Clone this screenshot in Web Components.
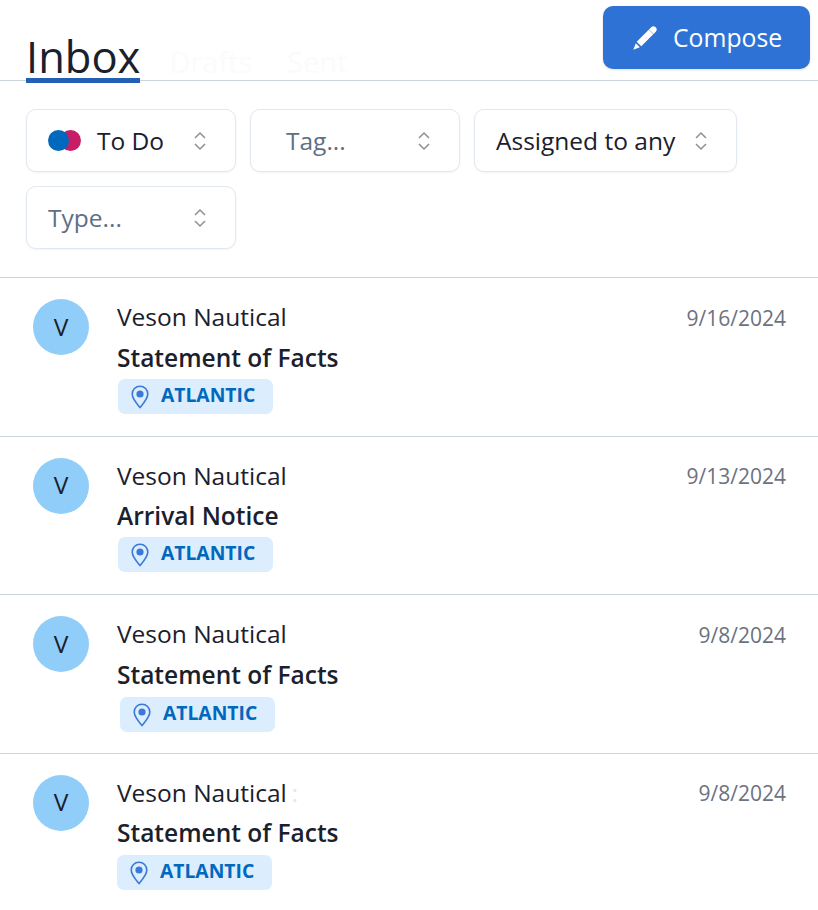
<!DOCTYPE html>
<html lang="en">
<head>
<meta charset="utf-8">
<title>Inbox</title>
<style>
  html, body { margin: 0; background: #fff; }
  body { font-family: "Open Sans", sans-serif; color: #1a202c; overflow: hidden; height: 910px; }
  [slot="after"] { margin-left: 5px; }
</style>
</head>
<body>
<inbox-page>
  <inbox-header></inbox-header>
  <inbox-filters>
    <filter-select dots value>To Do</filter-select>
    <filter-select indent>Tag...</filter-select>
    <filter-select value wide>Assigned to any</filter-select>
    <filter-select>Type...</filter-select>
  </inbox-filters>
  <inbox-row date="9/16/2024" subject="Statement of Facts" height="159" gap="5" date-top="1"></inbox-row>
  <inbox-row date="9/13/2024" subject="Arrival Notice" height="158" gap="4"></inbox-row>
  <inbox-row date="9/8/2024" subject="Statement of Facts" height="159" gap="5" date-top="1" shift="3" drop="1"></inbox-row>
  <inbox-row date="9/8/2024" subject="Statement of Facts" height="157" gap="4" shift="0" drop="1" last>
    <span slot="after">:</span>
  </inbox-row>
</inbox-page>

<script>
class InboxPage extends HTMLElement {
  constructor() {
    super();
    this.attachShadow({ mode: "open" });
    this.shadowRoot.innerHTML = `
    <style>:host { display: block; }</style>
    <slot></slot>`;
  }
}

class InboxHeader extends HTMLElement {
  constructor() {
    super();
    this.attachShadow({ mode: "open" });
    this.shadowRoot.innerHTML = /* html */`
    <style>
      :host {
        display: flex;
        justify-content: space-between;
        height: 80px;
        padding: 0 8px 0 26px;
        border-bottom: 1px solid #cbd5e0;
      }
      .tabs { display: flex; gap: 29px; align-items: flex-end; }
      .tab {
        font-size: 29px;
        line-height: 36px;
        height: 36px;
        color: #fbfbfb;
      }
      .tab + .tab + .tab { margin-left: 6px; }
      .tab.active {
        font-size: 43.500px;
        line-height: 52px;
        height: 47px;
        color: #1a202c;
        margin-bottom: -3px;
        border-bottom: 5px solid #225fb5;
      }
      .compose {
        display: flex;
        align-items: center;
        gap: 16px;
        box-sizing: border-box;
        width: 207px;
        height: 63px;
        margin-top: 6px;
        padding-left: 30px;
        border: 0;
        border-radius: 10px;
        background: #2f72d6;
        color: #fff;
        font: 400 24.75px "Open Sans", sans-serif;
        box-shadow: 0 1px 3px rgba(0,0,0,.12);
      }
      svg { width: 24px; height: 24px; fill: #fff; flex: none; }
    </style>
    <div class="tabs">
      <div class="tab active">Inbox</div>
      <div class="tab">Drafts</div>
      <div class="tab">Sent</div>
    </div>
    <button class="compose">
      <svg viewBox="0 0 24 24">
        <path d="M3.740 15.740 18.240 1.240A3.200 3.200 0 0 1 22.760 5.760L8.260 20.260Z"/>
        <path d="M2.800 17.200 6.800 21.200.3 23.700Z"/>
        <path d="M15.900 3.600 20.400 8.100" stroke="#2f72d6" stroke-width=".5"/>
      </svg>
      <span>Compose</span>
    </button>`;
  }
}

class InboxFilters extends HTMLElement {
  constructor() {
    super();
    this.attachShadow({ mode: "open" });
    this.shadowRoot.innerHTML = `
    <style>
      :host {
        display: flex;
        flex-wrap: wrap;
        gap: 14px;
        box-sizing: border-box;
        height: 197px;
        padding: 28px 60px 0 26px;
        border-bottom: 1px solid #cbd5e0;
        align-content: flex-start;
      }
    </style>
    <slot></slot>`;
  }
}

class FilterSelect extends HTMLElement {
  constructor() {
    super();
    this.attachShadow({ mode: "open" });
    this.shadowRoot.innerHTML = /* html */`
    <style>
      :host {
        display: flex;
        align-items: center;
        box-sizing: border-box;
        width: 210px;
        height: 63px;
        padding: 0 29px 0 21px;
        border: 1px solid #e2e8f0;
        border-radius: 10px;
        background: #fff;
        box-shadow: 0 1px 2px rgba(0,0,0,.05);
        font-size: 24.5px;
        color: #5f6f85;
      }
      :host([value]) { color: #1a202c; }
      :host([indent]) { padding-left: 35px; }
      :host([wide]) { width: 263px; }
      .dots { display: none; position: relative; width: 33px; height: 21px; margin-right: 16px; flex: none; }
      :host([dots]) .dots { display: block; }
      .dots i { position: absolute; top: 0; width: 21px; height: 21px; border-radius: 50%; }
      .dots i:first-child { left: 12px; background: #c71d66; }
      .dots i:last-child { left: 0; background: #0068bd; }
      .label { flex: 1; white-space: nowrap; }
      svg { width: 12px; height: 20px; flex: none; fill: none; stroke: #8f8f8f; stroke-width: 1.5; }
    </style>
    <span class="dots"><i></i><i></i></span>
    <span class="label"><slot></slot></span>
    <svg viewBox="0 0 12 20"><path d="M1 7 6 2l5 5M1 13l5 5 5-5"/></svg>`;
  }
}

class LocationTag extends HTMLElement {
  constructor() {
    super();
    this.attachShadow({ mode: "open" });
    this.shadowRoot.innerHTML = /* html */`
    <style>
      :host {
        display: inline-flex;
        align-items: center;
        gap: 12px;
        box-sizing: border-box;
        width: 155px;
        height: 35px;
        padding-left: 13px;
        border-radius: 7px;
        background: #dcedfe;
        color: #0068bd;
        font-size: 19.3px;
        font-weight: 700;
      }
      svg { width: 18px; height: 24px; flex: none; }
      span { position: relative; top: -2px; }
    </style>
    <svg viewBox="0 0 18 24">
      <path d="M9 1.200C4.600 1.200 1.200 4.600 1.200 9c0 4.600 4.600 9.800 7.800 13.600C12.200 18.800 16.800 13.600 16.800 9c0-4.400-3.400-7.800-7.800-7.800Z" fill="none" stroke="#3b78d8" stroke-width="1.600" stroke-linejoin="round"/>
      <circle cx="9" cy="9" r="3.600" fill="#3b78d8"/>
    </svg>
    <span><slot></slot></span>`;
  }
}

class InboxRow extends HTMLElement {
  constructor() {
    super();
    this.attachShadow({ mode: "open" });
    this.shadowRoot.innerHTML = /* html */`
    <style>
      :host {
        display: grid;
        grid-template-columns: 56px 1fr auto;
        column-gap: 28px;
        align-items: start;
        box-sizing: border-box;
        padding: 21px 32px 0 33px;
        border-bottom: 1px solid #cbd5e0;
      }
      :host([last]) { border-bottom: 0; }
      .avatar {
        display: grid;
        place-items: center;
        box-sizing: border-box;
        width: 56px;
        height: 56px;
        padding-bottom: 2px;
        border-radius: 50%;
        background: #90cdf9;
        font-size: 24.5px;
        color: #1a202c;
      }
      :host([gap="4"]) .avatar { padding-bottom: 4px; }
      .from { font-size: 24.5px; line-height: 36px; white-space: nowrap; color: #1a202c; }
      ::slotted([slot="after"]) { color: #fde3c2; }
      .subject { font-size: 24.5px; line-height: 36px; font-weight: 600; color: #1a202c; }
      location-tag { display: inline-flex; margin-top: 3px; }
      .date { font-size: 21px; line-height: 36px; color: #6b7280; }
    </style>
    <div class="avatar">V</div>
    <div>
      <div class="from">Veson Nautical<slot name="after"></slot></div>
      <div class="subject"></div>
      <location-tag>ATLANTIC</location-tag>
    </div>
    <div class="date"></div>`;
  }

  connectedCallback() {
    this.style.height = this.getAttribute("height") + "px";
    const date = this.shadowRoot.querySelector(".date");
    date.textContent = this.getAttribute("date");
    date.style.marginTop = (this.getAttribute("date-top") || 0) + "px";
    const subject = this.shadowRoot.querySelector(".subject");
    subject.textContent = this.getAttribute("subject");
    subject.style.marginTop = this.getAttribute("gap") + "px";
    const tag = this.shadowRoot.querySelector("location-tag");
    tag.style.marginLeft = (this.getAttribute("shift") || 1) + "px";
    tag.style.marginTop = 3 + Number(this.getAttribute("drop") || 0) + "px";
  }
}

customElements.define("inbox-page", InboxPage);
customElements.define("inbox-header", InboxHeader);
customElements.define("inbox-filters", InboxFilters);
customElements.define("filter-select", FilterSelect);
customElements.define("location-tag", LocationTag);
customElements.define("inbox-row", InboxRow);
</script>
</body>
</html>
